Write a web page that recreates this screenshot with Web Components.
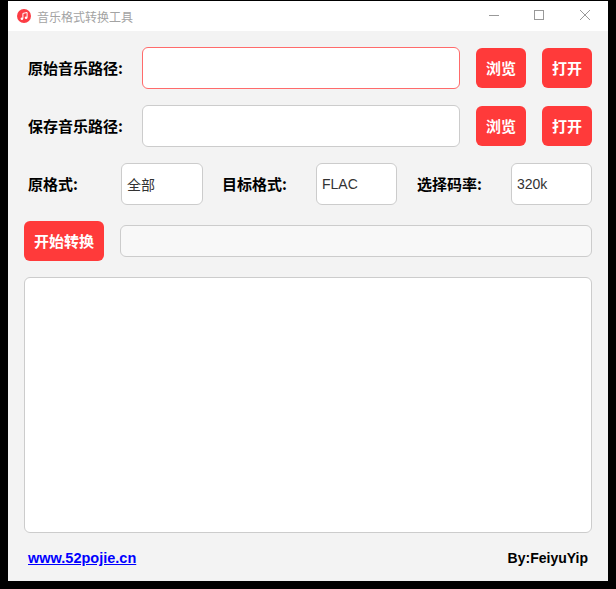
<!DOCTYPE html>
<html lang="zh-CN">
<head>
<meta charset="utf-8">
<title>音乐格式转换工具</title>
<style>
  html, body { margin: 0; height: 100%; background: #000; }
  body { padding: 1px 8px 8px; box-sizing: border-box; overflow: hidden; font-family: "Noto Sans CJK SC", sans-serif; }
</style>
</head>
<body>
<convert-window>
  <title-bar slot="bar" title-text="音乐格式转换工具"></title-bar>

  <form-row>
    <field-label width="114">原始音乐路径:</field-label>
    <text-field grow focused></text-field>
    <red-button width="50" gap="16">浏览</red-button>
    <red-button width="50" gap="16">打开</red-button>
  </form-row>
  <form-row>
    <field-label width="114">保存音乐路径:</field-label>
    <text-field grow></text-field>
    <red-button width="50" gap="16">浏览</red-button>
    <red-button width="50" gap="16">打开</red-button>
  </form-row>
  <form-row>
    <field-label width="93">原格式:</field-label>
    <text-field width="82">全部</text-field>
    <field-label width="94" gap="19">目标格式:</field-label>
    <text-field width="81">FLAC</text-field>
    <field-label width="94" gap="20">选择码率:</field-label>
    <text-field width="81">320k</text-field>
  </form-row>
  <start-row></start-row>
  <log-box></log-box>
  <foot-bar></foot-bar>
</convert-window>

<script>
class ConvertWindow extends HTMLElement {
  constructor() {
    super();
    this.attachShadow({ mode: 'open' });
    this.shadowRoot.innerHTML = `
      <style>
        :host { display: flex; flex-direction: column; width: 600px; height: 580px; background: #f3f3f3; }
        .content { flex: 1; display: flex; flex-direction: column; padding: 16px 16px 0; gap: 16px; }
      </style>
      <slot name="bar"></slot>
      <div class="content"><slot></slot></div>
    `;
  }
}

class TitleBar extends HTMLElement {
  constructor() {
    super();
    this.attachShadow({ mode: 'open' });
    this.shadowRoot.innerHTML = `
      <style>
        :host { display: flex; align-items: center; height: 30px; background: #fff; padding-left: 9px; }
        .logo { width: 14px; height: 14px; margin-right: 6px; }
        .name { flex: 1; font-size: 12px; color: #a3a3a3; }
        .btns { display: flex; }
        .btns svg { display: block; width: 46px; height: 30px; }
      </style>
      <svg class="logo" viewBox="0 0 14 14">
        <circle cx="7" cy="7" r="7" fill="#fc3c44"/>
        <path d="M5.9 9.6 V4.4 L10.1 3.5 V8.6" fill="none" stroke="#fff" stroke-width="1"/>
        <circle cx="4.9" cy="9.7" r="1.3" fill="#fff"/>
        <circle cx="9.1" cy="8.7" r="1.3" fill="#fff"/>
      </svg>
      <span class="name">${this.getAttribute('title-text')}</span>
      <div class="btns">
        <svg viewBox="0 0 46 30"><path d="M19 14.5 H29" stroke="#999" fill="none"/></svg>
        <svg viewBox="0 0 46 30"><rect x="18.5" y="9.5" width="9" height="9" stroke="#999" fill="none"/></svg>
        <svg viewBox="0 0 46 30"><path d="M18 9 L28 19 M28 9 L18 19" stroke="#999" fill="none"/></svg>
      </div>
    `;
  }
}

class FormRow extends HTMLElement {
  constructor() {
    super();
    this.attachShadow({ mode: 'open' });
    this.shadowRoot.innerHTML = `
      <style>
        :host { display: flex; align-items: center; height: 42px; }
      </style>
      <slot></slot>
    `;
  }
}

class FieldLabel extends HTMLElement {
  constructor() {
    super();
    this.attachShadow({ mode: 'open' });
    this.shadowRoot.innerHTML = `
      <style>
        :host { display: block; flex: none; padding-left: 4px; padding-bottom: 2px; font-size: 15px; font-weight: 700; color: #000; white-space: nowrap; }
      </style>
      <slot></slot>
    `;
  }
  connectedCallback() {
    this.style.width = this.getAttribute('width') + 'px';
    if (this.hasAttribute('gap')) this.style.marginLeft = (this.getAttribute('gap') - 4) + 'px';
  }
}

class TextField extends HTMLElement {
  constructor() {
    super();
    this.attachShadow({ mode: 'open' });
    this.shadowRoot.innerHTML = `
      <style>
        :host { display: flex; align-items: center; box-sizing: border-box; height: 42px; flex: none; padding-left: 5px;
          background: #fff; border: 1px solid #ccc; border-radius: 6px; font-family: "Liberation Sans", "Noto Sans CJK SC", sans-serif; font-size: 14px; color: #333; }
        :host([grow]) { flex: 1; }
        :host([focused]) { border-color: #ff6b6b; }
      </style>
      <slot></slot>
    `;
  }
  connectedCallback() {
    if (this.hasAttribute('width')) this.style.width = this.getAttribute('width') + 'px';
  }
}

class RedButton extends HTMLElement {
  constructor() {
    super();
    this.attachShadow({ mode: 'open' });
    this.shadowRoot.innerHTML = `
      <style>
        :host { display: flex; align-items: center; justify-content: center; flex: none; box-sizing: border-box; height: 40px; padding-bottom: 2px; background: #ff3a3a;
          border-radius: 6px; color: #fff; font-size: 15px; font-weight: 700; white-space: nowrap; }
      </style>
      <slot></slot>
    `;
  }
  connectedCallback() {
    this.style.width = this.getAttribute('width') + 'px';
    if (this.hasAttribute('gap')) this.style.marginLeft = this.getAttribute('gap') + 'px';
  }
}

class StartRow extends HTMLElement {
  constructor() {
    super();
    this.attachShadow({ mode: 'open' });
    this.shadowRoot.innerHTML = `
      <style>
        :host { display: flex; align-items: center; gap: 16px; height: 40px; }
        .bar { flex: 1; box-sizing: border-box; height: 32px; background: #f8f8f8; border: 1px solid #ccc; border-radius: 6px; }
      </style>
      <red-button width="80">开始转换</red-button>
      <div class="bar"></div>
    `;
  }
}

class LogBox extends HTMLElement {
  constructor() {
    super();
    this.attachShadow({ mode: 'open' });
    this.shadowRoot.innerHTML = `
      <style>
        :host { display: block; box-sizing: border-box; height: 256px; background: #fff; border: 1px solid #ccc; border-radius: 6px; }
      </style>
    `;
  }
}

class FootBar extends HTMLElement {
  constructor() {
    super();
    this.attachShadow({ mode: 'open' });
    this.shadowRoot.innerHTML = `
      <style>
        :host { display: flex; justify-content: space-between; align-items: center; padding: 0 4px; height: 18px;
          font-family: "Liberation Sans", sans-serif; font-size: 14px; font-weight: 700; color: #000; }
        a { color: #0000ff; text-decoration: underline; font-size: 14.5px; }
      </style>
      <a href="#">www.52pojie.cn</a>
      <span>By:FeiyuYip</span>
    `;
  }
}

customElements.define('convert-window', ConvertWindow);
customElements.define('title-bar', TitleBar);
customElements.define('form-row', FormRow);
customElements.define('field-label', FieldLabel);
customElements.define('text-field', TextField);
customElements.define('red-button', RedButton);
customElements.define('start-row', StartRow);
customElements.define('log-box', LogBox);
customElements.define('foot-bar', FootBar);
</script>
</body>
</html>
